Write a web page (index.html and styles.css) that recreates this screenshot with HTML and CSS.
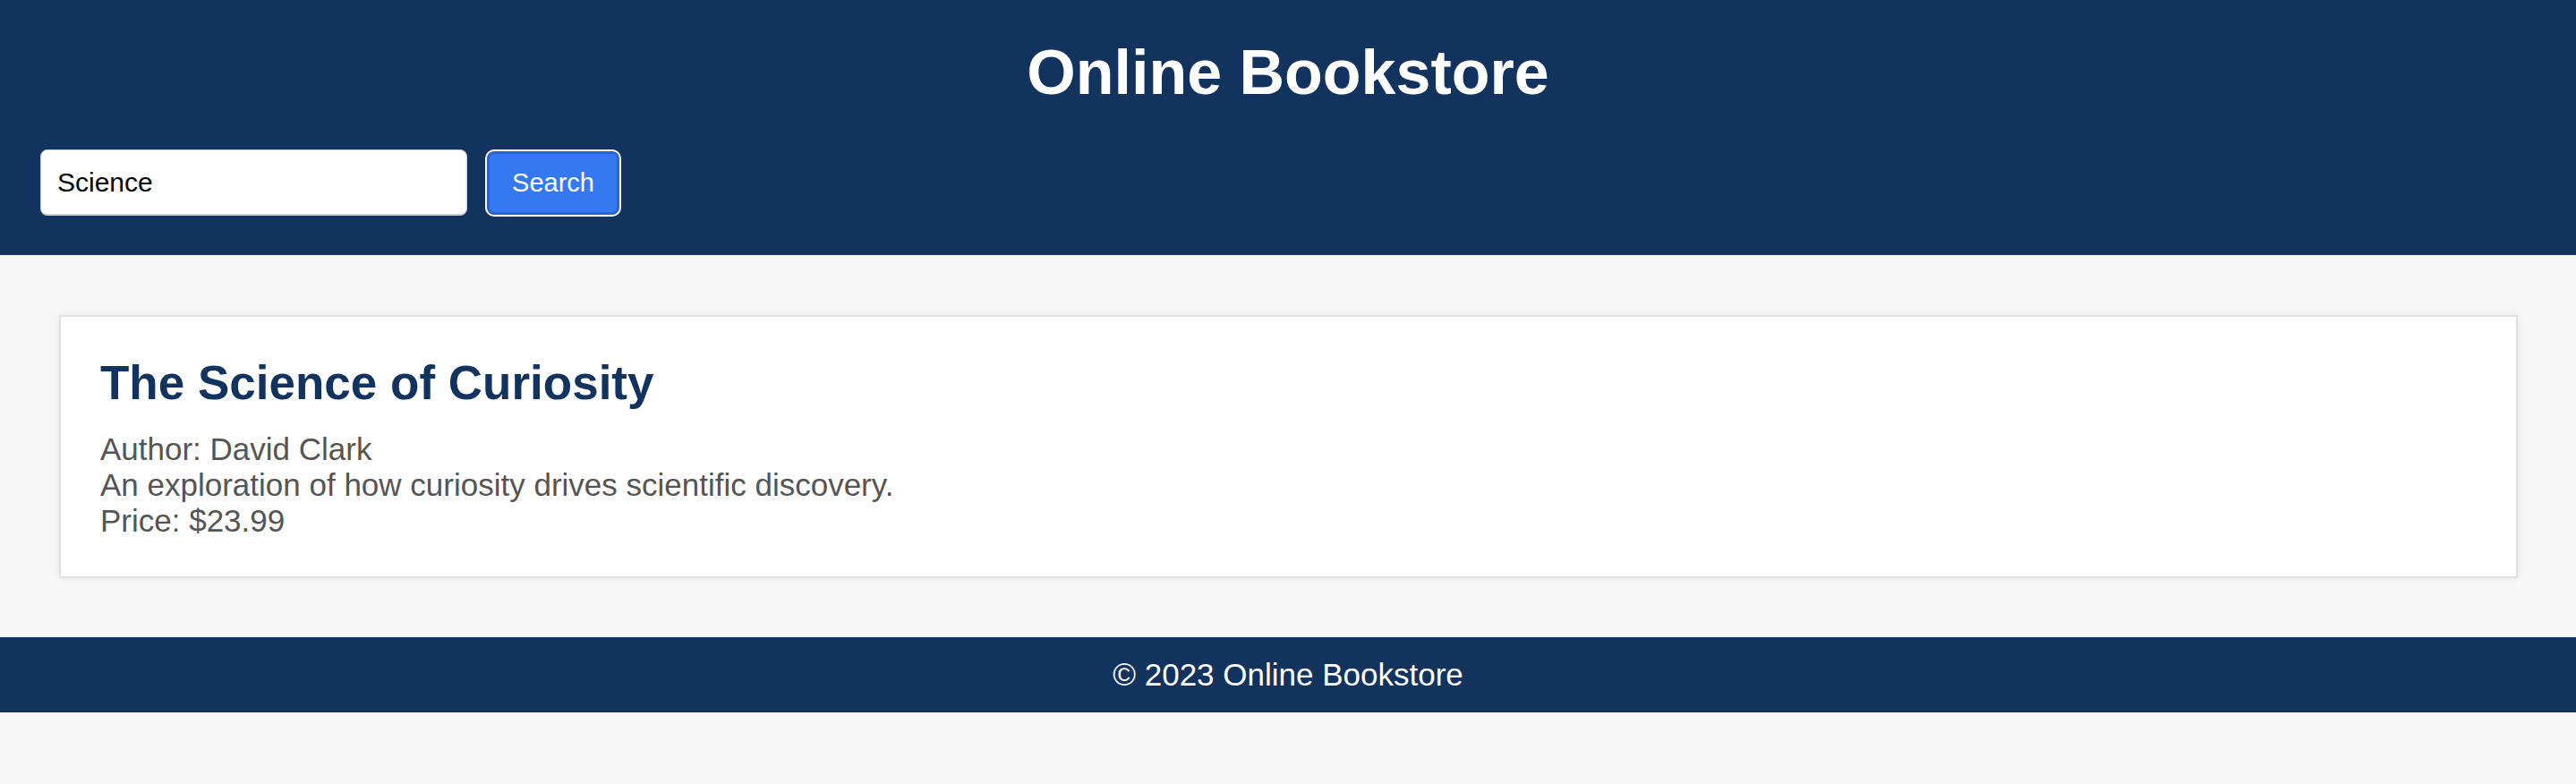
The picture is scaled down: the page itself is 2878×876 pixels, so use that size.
FILE: index.html
```html
<!DOCTYPE html>
<html lang="en">
<head>
<meta charset="utf-8">
<title>Online Bookstore</title>
<link rel="stylesheet" href="styles.css">
</head>
<body>
<header class="site-header">
  <h1 class="site-title">Online Bookstore</h1>
  <form class="search-row" onsubmit="return false">
    <input class="search-input" type="text" value="Science">
    <button class="search-button" type="submit">Search</button>
  </form>
</header>
<main class="content">
  <article class="book-card">
    <h2 class="book-title">The Science of Curiosity</h2>
    <div class="book-line">Author: David Clark</div>
    <div class="book-line">An exploration of how curiosity drives scientific discovery.</div>
    <div class="book-line">Price: $23.99</div>
  </article>
</main>
<footer class="site-footer">© 2023 Online Bookstore</footer>
</body>
</html>
```
FILE: styles.css
```css
html, body {
  margin: 0;
  padding: 0;
  background: #f7f7f7;
  font-family: "Liberation Sans", Arial, Helvetica, sans-serif;
}

.site-header {
  background: #12335e;
  padding: 41px 45px 44px;
}

.site-title {
  margin: 0 0 46px;
  font-size: 70px;
  line-height: 80px;
  font-weight: bold;
  color: #ffffff;
  text-align: center;
}

.search-row {
  display: flex;
  align-items: center;
  gap: 22px;
  margin: 0;
}

.search-input {
  box-sizing: border-box;
  width: 477px;
  height: 74px;
  padding: 0 18px;
  font-family: inherit;
  font-size: 30px;
  color: #000;
  background: #fff;
  border: 1px solid #c9ccd1;
  border-bottom-width: 2px;
  border-radius: 8px;
  outline: none;
}

.search-button {
  box-sizing: border-box;
  width: 148px;
  height: 71px;
  font-family: inherit;
  font-size: 29px;
  color: #ffffff;
  background: #3479f1;
  border: 3px solid #2a64cf;
  border-radius: 8px;
  box-shadow: 0 0 0 2px #ffffff;
  cursor: pointer;
}

.content {
  padding: 67px 65px 66px 66px;
}

.book-card {
  background: #ffffff;
  border: 2px solid #e0e0e0;
  box-shadow: 0 0 10px rgba(0, 0, 0, 0.07);
  padding: 43px 44px 42px;
}

.book-title {
  margin: 0 0 24px;
  font-size: 53px;
  line-height: 61px;
  font-weight: bold;
  color: #12335e;
}

.book-line {
  font-size: 35px;
  line-height: 40px;
  color: #555555;
}

.site-footer {
  background: #12335e;
  color: #ffffff;
  text-align: center;
  font-size: 35px;
  line-height: 40px;
  padding: 22px 0;
}
```
